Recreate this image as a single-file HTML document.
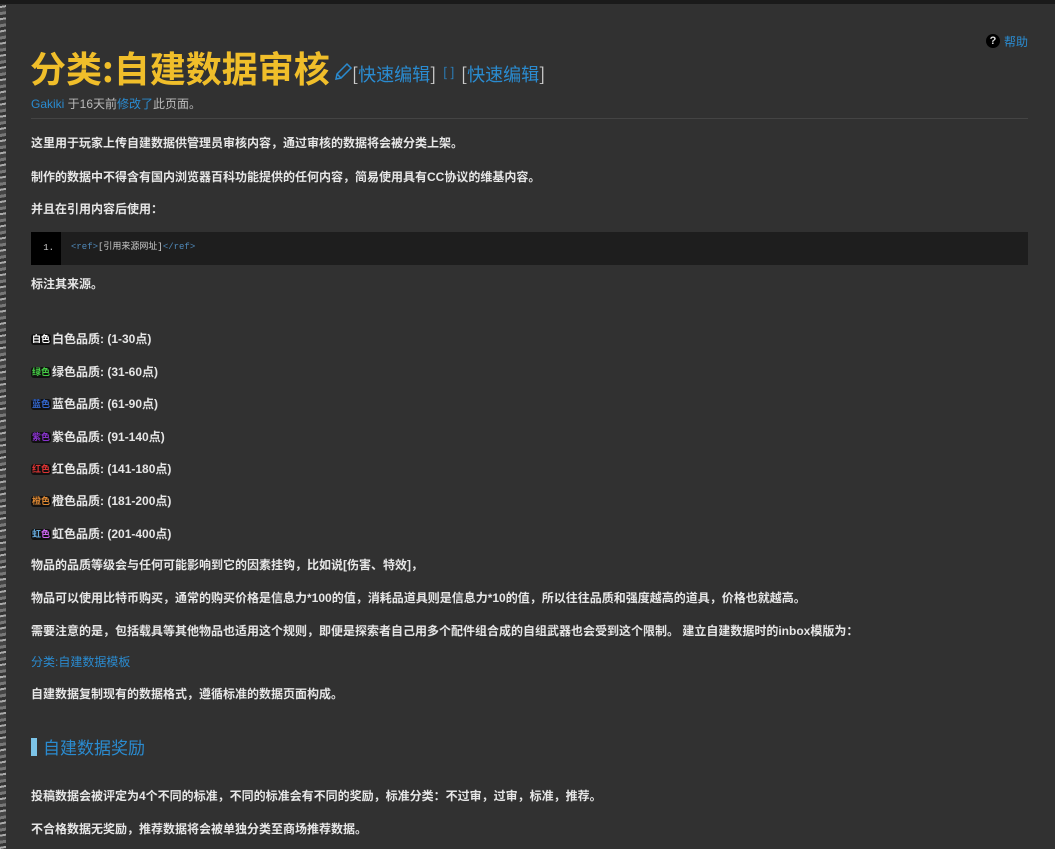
<!DOCTYPE html>
<html><head><meta charset="utf-8"><style>
body{margin:0;width:1055px;height:849px;overflow:hidden;background:#2a2a2a;font-family:"Liberation Sans","Noto Sans CJK SC",sans-serif;position:relative}
.strip{position:absolute;left:0;top:0;width:6px;height:849px;background:repeating-linear-gradient(170deg,#777 0 3px,#333 3px 6px,#aaa 6px 8px,#444 8px 12px)}
.top{position:absolute;left:0;top:0;width:1055px;height:4px;background:#1a1a1a}
.panel{position:absolute;left:6px;top:4px;width:1049px;height:845px;background:#313131}
.a{position:absolute;left:31px;font-size:12px;font-weight:bold;color:#e6e6e6;white-space:nowrap;line-height:16px}
h1{position:absolute;left:30px;top:44px;margin:0;font-size:36px;line-height:46px;color:#f0be2a;font-weight:bold;font-family:"Noto Sans CJK SC",sans-serif;white-space:nowrap}
.qe{position:absolute;top:62px;font-size:18px;color:#2a8bd0;white-space:nowrap;font-family:"Noto Sans CJK SC",sans-serif;line-height:24px}
.qe b{color:#ccc;font-weight:normal}
.badge{display:inline-block;font-size:9px;padding:0 1px;background:#111;border-radius:3px;margin-right:1px;line-height:11px;vertical-align:1px}
</style></head><body>
<div class="strip"></div><div class="top"></div>
<div class="panel"></div>
<div style="position:absolute;left:986px;top:34px;width:14px;height:14px;border-radius:7px;background:#000;color:#ddd;font-size:11px;font-weight:bold;text-align:center;line-height:14px">?</div>
<div style="position:absolute;left:1004px;top:33px;font-size:12px;color:#2a8bd0">帮助</div>
<h1>分类:自建数据审核</h1>
<svg style="position:absolute;left:333px;top:62px" width="20" height="20" viewBox="0 0 20 20"><path d="M3 17 L4 12 L14 2 L18 6 L8 16 Z M4 12 L8 16" fill="none" stroke="#2a8bd0" stroke-width="1.5"/></svg>
<div class="qe" style="left:352px"><b>[</b>快速编辑<b>]</b></div>
<div class="qe" style="left:443px;font-size:13px;top:60px">[ ]</div>
<div class="qe" style="left:461px"><b>[</b>快速编辑<b>]</b></div>
<div style="position:absolute;left:31px;top:95px;font-size:12px;color:#bbb"><span style="color:#2a8bd0">Gakiki</span> 于16天前<span style="color:#2a8bd0">修改了</span>此页面。</div>
<div style="position:absolute;left:31px;top:118px;width:997px;height:1px;background:#444"></div>
<div class="a" style="top:135px">这里用于玩家上传自建数据供管理员审核内容，通过审核的数据将会被分类上架。</div>
<div class="a" style="top:169px">制作的数据中不得含有国内浏览器百科功能提供的任何内容，简易使用具有CC协议的维基内容。</div>
<div class="a" style="top:201px">并且在引用内容后使用：</div>
<div style="position:absolute;left:31px;top:232px;width:997px;height:33px;background:#1e1e1e"></div>
<div style="position:absolute;left:31px;top:232px;width:30px;height:33px;background:#000;color:#ccc;font-family:'Liberation Mono',monospace;font-size:9px;line-height:33px;text-align:right;box-sizing:border-box;padding-right:7px">1.</div>
<div style="position:absolute;left:71px;top:232px;line-height:31px;font-family:'Liberation Mono','Noto Sans CJK SC',monospace;font-size:9px;color:#ccc"><span style="color:#4f88b8">&lt;ref&gt;</span>[引用来源网址]<span style="color:#4f88b8">&lt;/ref&gt;</span></div>
<div class="a" style="top:276px">标注其来源。</div>
<div class="a" style="top:331px"><span class="badge" style="color:#fff">白色</span>白色品质: (1-30点)</div>
<div class="a" style="top:364px"><span class="badge" style="color:#4c4">绿色</span>绿色品质: (31-60点)</div>
<div class="a" style="top:396px"><span class="badge" style="color:#36c">蓝色</span>蓝色品质: (61-90点)</div>
<div class="a" style="top:429px"><span class="badge" style="color:#83c">紫色</span>紫色品质: (91-140点)</div>
<div class="a" style="top:461px"><span class="badge" style="color:#d33">红色</span>红色品质: (141-180点)</div>
<div class="a" style="top:493px"><span class="badge" style="color:#d83">橙色</span>橙色品质: (181-200点)</div>
<div class="a" style="top:526px"><span class="badge" style="color:#6ad">虹<span style="color:#c6e">色</span></span>虹色品质: (201-400点)</div>
<div class="a" style="top:557px">物品的品质等级会与任何可能影响到它的因素挂钩，比如说[伤害、特效]，</div>
<div class="a" style="top:590px">物品可以使用比特币购买，通常的购买价格是信息力*100的值，消耗品道具则是信息力*10的值，所以往往品质和强度越高的道具，价格也就越高。</div>
<div class="a" style="top:623px">需要注意的是，包括载具等其他物品也适用这个规则，即便是探索者自己用多个配件组合成的自组武器也会受到这个限制。 建立自建数据时的inbox模版为：</div>
<div class="a" style="top:654px;color:#2a8bd0;font-weight:normal">分类:自建数据模板</div>
<div class="a" style="top:686px">自建数据复制现有的数据格式，遵循标准的数据页面构成。</div>
<div style="position:absolute;left:31px;top:738px;width:6px;height:18px;background:#7cc4e8"></div>
<div style="position:absolute;left:43px;top:735px;font-size:17px;color:#2a8bd0;font-family:'Noto Sans CJK SC',sans-serif;line-height:24px">自建数据奖励</div>
<div class="a" style="top:788px">投稿数据会被评定为4个不同的标准，不同的标准会有不同的奖励，标准分类：不过审，过审，标准，推荐。</div>
<div class="a" style="top:821px">不合格数据无奖励，推荐数据将会被单独分类至商场推荐数据。</div>
</body></html>
